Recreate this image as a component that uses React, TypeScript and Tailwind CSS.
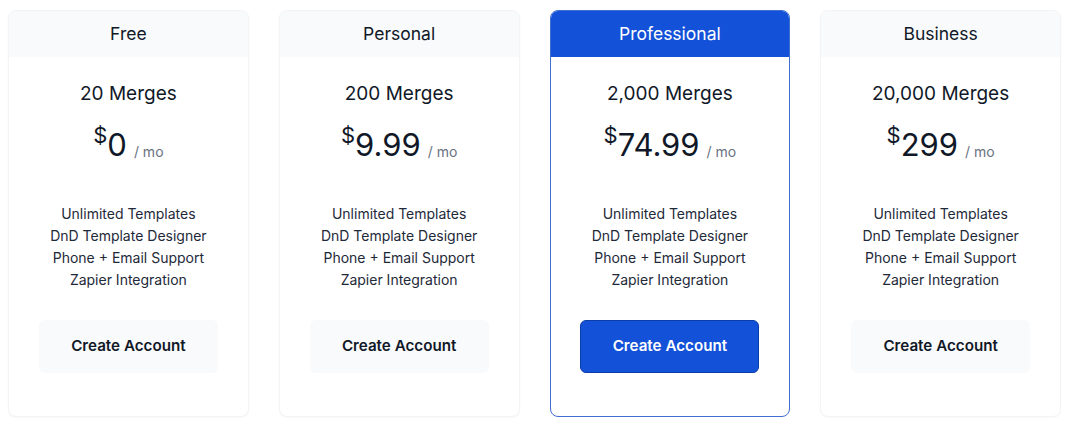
const plans = [
  { name: "Free", merges: "20 Merges", price: "0" },
  { name: "Personal", merges: "200 Merges", price: "9.99" },
  { name: "Professional", merges: "2,000 Merges", price: "74.99", featured: true },
  { name: "Business", merges: "20,000 Merges", price: "299" },
];

const features = [
  "Unlimited Templates",
  "DnD Template Designer",
  "Phone + Email Support",
  "Zapier Integration",
];

export default function App() {
  return (
    <div className="w-[1070px] h-[428px] bg-white font-['Inter',sans-serif] text-gray-900">
      <div className="grid grid-cols-4 gap-[30px] pl-[8px] pr-[9px] pt-[10px]">
        {plans.map((plan) => (
          <div
            key={plan.name}
            className={
              plan.featured
                ? "h-[407px] rounded-lg border border-[#3f6fd1] overflow-hidden bg-white"
                : "h-[407px] rounded-lg border border-gray-100 overflow-hidden bg-white shadow-[0_1px_2px_rgba(0,0,0,0.03)]"
            }
          >
            <div
              className={
                plan.featured
                  ? "h-[46px] flex items-center justify-center bg-[#1351d8] text-white text-[17.5px]"
                  : "h-[46px] flex items-center justify-center bg-gray-50 text-[17.5px]"
              }
            >
              {plan.name}
            </div>
            <div className="flex flex-col items-center pt-[23px]">
              <p className="text-[19px] leading-7">{plan.merges}</p>
              <div className="flex items-start mt-[15px] h-[40px]">
                <span className="text-[22px] leading-none mt-[1px]">$</span>
                <span className="text-[31px] leading-none mt-[6px]">{plan.price}</span>
                <span className="text-[14px] text-gray-500 ml-[7px] mt-[18px]">/ mo</span>
              </div>
              <ul className="mt-[40px] text-[14px] leading-[22px] text-gray-800 text-center">
                {features.map((f) => (
                  <li key={f}>{f}</li>
                ))}
              </ul>
              <button
                className={
                  plan.featured
                    ? "mt-[29px] w-[179px] h-[53px] rounded-md bg-[#1351d8] border border-[#0c3ea8] text-white font-semibold text-[15.2px]"
                    : "mt-[29px] w-[179px] h-[53px] rounded-md bg-gray-50 font-semibold text-[15.2px] text-gray-900"
                }
              >
                Create Account
              </button>
            </div>
          </div>
        ))}
      </div>
    </div>
  );
}
